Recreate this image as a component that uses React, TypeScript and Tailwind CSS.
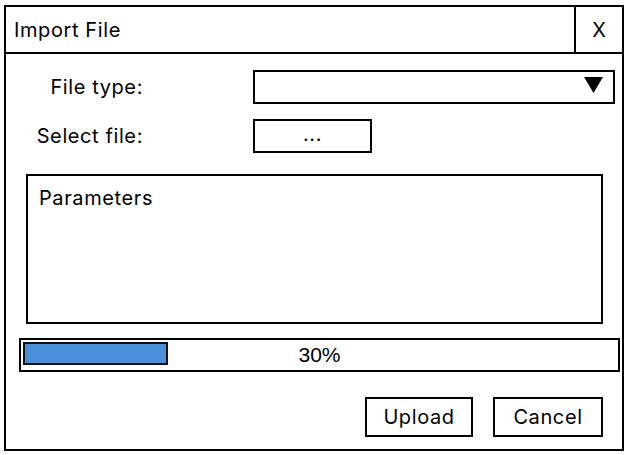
import React from 'react';

const ui = { fontFamily: 'Inter, "Liberation Sans", sans-serif' };
const arial = { fontFamily: '"Liberation Sans", Arial, sans-serif' };

export default function App() {
  const progress = 30;

  return (
    <div className="w-[632px] h-[455px] bg-white pl-[4px] pt-[5px] text-black text-[20px] tracking-[0.6px]" style={ui}>
      <div className="w-[620px] h-[446px] border-2 border-black flex flex-col">
        {/* Title bar */}
        <div className="h-[47px] flex border-b-2 border-black">
          <div className="flex-1 flex items-center pl-[8px]">Import File</div>
          <div className="w-[48px] border-l-2 border-black flex items-center justify-center tracking-normal">X</div>
        </div>

        {/* Form rows */}
        <div className="flex items-center mt-[16px]">
          <div className="w-[137px] text-right">File type:</div>
          <div className="ml-[110px] w-[362px] h-[34px] border-2 border-black flex items-center justify-end pr-[10px] pb-[4px]">
            <svg width="19" height="16" viewBox="0 0 19 16">
              <polygon points="0,0 19,0 9.5,16" fill="black" />
            </svg>
          </div>
        </div>

        <div className="flex items-center mt-[15px]">
          <div className="w-[137px] text-right">Select file:</div>
          <button className="ml-[110px] w-[119px] h-[34px] border-2 border-black flex items-center justify-center pb-[4px]">
            ...
          </button>
        </div>

        {/* Parameters */}
        <div className="ml-[20px] mt-[21px] w-[577px] h-[150px] border-2 border-black pl-[11px] pt-[7px]">
          Parameters
        </div>

        {/* Progress */}
        <div className="relative ml-[13px] mt-[14px] w-[601px] h-[34px] border-2 border-black flex items-center justify-center">
          <div
            className="absolute left-[2px] top-[2px] h-[23px] border-2 border-[#111] bg-[#4a90d9]"
            style={{ width: `${(progress / 30) * 145}px` }}
          />
          <span className="text-[21px] tracking-normal" style={arial}>{progress}%</span>
        </div>

        {/* Buttons */}
        <div className="flex justify-end gap-[20px] pr-[19px] mt-[25px]">
          <button className="w-[108px] h-[40px] border-2 border-black">Upload</button>
          <button className="w-[110px] h-[40px] border-2 border-black">Cancel</button>
        </div>
      </div>
    </div>
  );
}
